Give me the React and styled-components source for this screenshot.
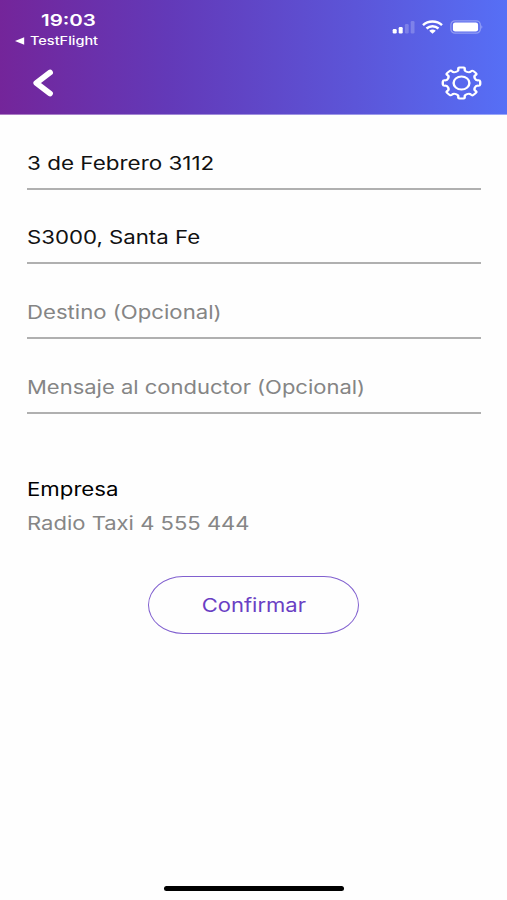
import React from "react";
import styled, { createGlobalStyle } from "styled-components";

const GlobalStyle = createGlobalStyle`
  * { box-sizing: border-box; }
  body { margin: 0; background: #fefefe; }
`;

const Screen = styled.div`
  width: 507px;
  height: 900px;
  display: flex;
  flex-direction: column;
  overflow: hidden;
  background: #fefefe;
  font-family: Inter, "Liberation Sans", sans-serif;
`;

const Header = styled.header`
  height: 115px;
  flex: none;
  color: #fff;
  background: linear-gradient(90deg, #74259a 0%, #6339b8 33%, #5c55d8 70%, #566ff6 100%);
  border-bottom: 1px solid rgba(255, 255, 255, 0.4);
`;

const StatusBar = styled.div`
  height: 50px;
  display: flex;
  justify-content: space-between;
  padding: 10px 23px 0 15px;
`;

const Clock = styled.div`
  display: flex;
  flex-direction: column;
`;

const BackToApp = styled.div`
  display: flex;
  flex: none;
  align-items: center;
  gap: 5px;
  height: 22px;
`;

const StatusIcons = styled.div`
  display: flex;
  align-items: center;
  gap: 7px;
  height: 34px;
`;

const NavBar = styled.nav`
  height: 64px;
  display: flex;
  align-items: center;
  justify-content: space-between;
  padding: 2px 25px 0 32px;
`;

const IconButton = styled.button`
  display: flex;
  padding: 0;
  border: 0;
  background: none;
  color: inherit;
`;

const WideText = styled.span`
  display: block;
  width: max-content;
  white-space: nowrap;
  transform: scaleX(${(p) => p.$stretch || 1.19});
  transform-origin: ${(p) => p.$origin || "left"} center;
  font-size: ${(p) => p.$size || 18.5}px;
  font-weight: ${(p) => p.$weight || 400};
  line-height: ${(p) => p.$line || 24}px;
  margin-left: ${(p) => p.$indent || 0}px;
`;

const Form = styled.main`
  flex: 1;
  display: flex;
  flex-direction: column;
  padding: 0 26px 0 27px;
`;

const Field = styled.div`
  height: 74.7px;
  display: flex;
  align-items: flex-end;
  padding-bottom: 13px;
  border-bottom: 2px solid #b0b0b0;
  color: ${(p) => (p.$placeholder ? "#858585" : "#111")};
`;

const Company = styled.section`
  margin-top: 63px;
  display: flex;
  flex-direction: column;
  gap: 10px;
  color: #868686;
`;

const CompanyTitle = styled.div`
  color: #000;
`;

const ConfirmButton = styled.button`
  align-self: center;
  width: 211px;
  height: 58px;
  margin: 41px 1px 0 0;
  padding: 0 0 0 1px;
  display: flex;
  align-items: center;
  justify-content: center;
  border: 1.5px solid #8160cf;
  border-radius: 35px / 29px;
  background: transparent;
  color: #6a3fc4;
  font-family: inherit;
`;

const HomeIndicator = styled.div`
  align-self: center;
  flex: none;
  width: 180px;
  height: 5px;
  margin-bottom: 9px;
  border-radius: 3px;
  background: #000;
`;

function gearPath() {
  const point = (radius, degrees) => {
    const a = (degrees * Math.PI) / 180;
    return `${(radius * Math.sin(a)).toFixed(2)} ${(-radius * Math.cos(a)).toFixed(2)}`;
  };
  let d = `M${point(18.7, -6)}`;
  for (let t = 0; t < 360; t += 45) {
    d += `Q${point(18.9, t)} ${point(18.7, t + 6)}`;
    d += `Q${point(18.7, t + 10.5)} ${point(16.9, t + 11)}`;
    d += `C${point(14, t + 11)} ${point(14, t + 34)} ${point(16.9, t + 34)}`;
    d += `Q${point(18.7, t + 34.5)} ${point(18.7, t + 39)}`;
  }
  return d + "Z";
}

const GearIcon = () => (
  <svg width="41" height="34" viewBox="-20.5 -20.5 41 41" preserveAspectRatio="none" fill="none" stroke="#fff" strokeWidth="2.4" strokeLinejoin="round">
    <path d={gearPath()} />
    <circle r="7.9" />
  </svg>
);

const BackIcon = () => (
  <svg width="22" height="28" viewBox="0 0 22 28" fill="none" stroke="#fff" strokeWidth="5.8" strokeLinecap="round" strokeLinejoin="round">
    <path d="M18 3.5 4.3 14 18 24.5" />
  </svg>
);

const SignalIcon = () => (
  <svg width="23" height="14" viewBox="0 0 23 14" fill="#fff">
    <rect x="0.7" y="9" width="4" height="4.5" rx="1.2" />
    <rect x="6.7" y="7" width="4" height="6.5" rx="1.2" />
    <rect x="12.9" y="4" width="3.8" height="9.5" rx="1.2" opacity="0.22" />
    <rect x="18.7" y="1" width="3.8" height="12.5" rx="1.2" opacity="0.22" />
  </svg>
);

const WifiIcon = () => (
  <svg width="21" height="14" viewBox="0 0 21 14" fill="none" stroke="#fff" strokeWidth="2.5">
    <path d="M1 5.1C6.2.3 14.8.3 20 5.1" />
    <path d="M4.5 8.5C8 5.5 13 5.5 16.5 8.5" />
    <path d="M7.2 10.8Q10.5 8.4 13.8 10.8L10.5 13.7Z" fill="#fff" stroke="none" />
  </svg>
);

const BatteryIcon = () => (
  <svg width="34" height="14" viewBox="0 0 34 14">
    <rect x=".9" y=".8" width="29.4" height="12.4" rx="4" fill="none" stroke="#fff" strokeOpacity=".35" strokeWidth="1.2" />
    <rect x="2.9" y="2.5" width="25.2" height="9" rx="2.3" fill="#fff" />
    <path d="M31.5 5Q33.3 7 31.5 9Z" fill="#fff" opacity=".5" />
  </svg>
);

const TriangleIcon = () => (
  <svg width="10" height="8" viewBox="0 0 10 8" fill="#fff">
    <path d="M0 4 9.2 .2V7.8Z" />
  </svg>
);

const fields = [
  { text: "3 de Febrero 3112", stretch: 1.213 },
  { text: "S3000, Santa Fe", stretch: 1.2 },
  { text: "Destino (Opcional)", stretch: 1.197, placeholder: true },
  { text: "Mensaje al conductor (Opcional)", stretch: 1.188, placeholder: true },
];

export default function App() {
  return (
    <Screen>
      <GlobalStyle />
      <Header>
        <StatusBar>
          <Clock>
            <WideText $size={16} $weight={600} $line={20} $indent={26} $stretch={1.28}>19:03</WideText>
            <BackToApp>
              <TriangleIcon />
              <WideText $size={11.5} $weight={500} $line={20} $stretch={1.26}>TestFlight</WideText>
            </BackToApp>
          </Clock>
          <StatusIcons>
            <SignalIcon />
            <WifiIcon />
            <BatteryIcon />
          </StatusIcons>
        </StatusBar>
        <NavBar>
          <IconButton aria-label="Volver"><BackIcon /></IconButton>
          <IconButton aria-label="Ajustes"><GearIcon /></IconButton>
        </NavBar>
      </Header>
      <Form>
        {fields.map((f) => (
          <Field key={f.text} $placeholder={f.placeholder}>
            <WideText $stretch={f.stretch}>{f.text}</WideText>
          </Field>
        ))}
        <Company>
          <CompanyTitle><WideText $stretch={1.2}>Empresa</WideText></CompanyTitle>
          <WideText>Radio Taxi 4 555 444</WideText>
        </Company>
        <ConfirmButton>
          <WideText $origin="center">Confirmar</WideText>
        </ConfirmButton>
      </Form>
      <HomeIndicator />
    </Screen>
  );
}
